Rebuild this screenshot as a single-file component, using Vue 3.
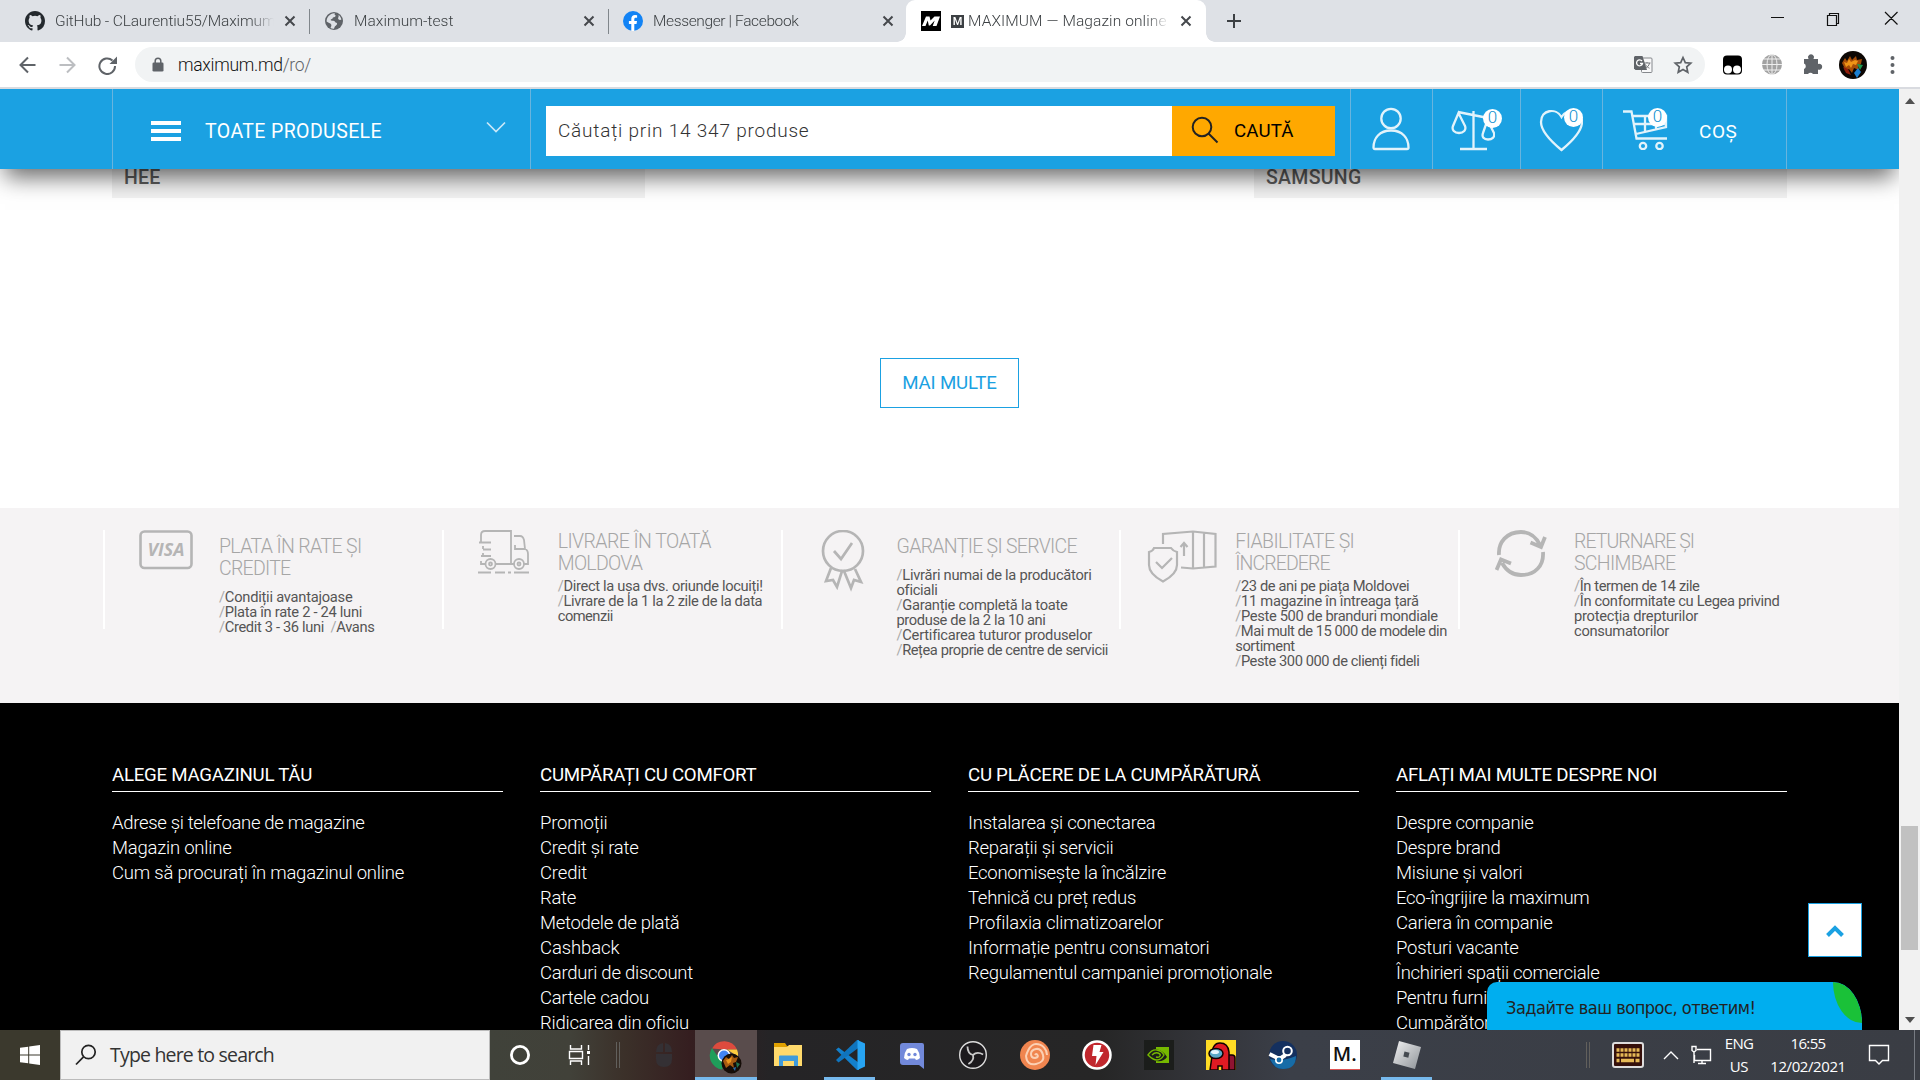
<script setup>
// Tracks a line of text out (or in) to the width given in the data.
const vFit = {
  mounted(el, { value }) {
    if (!value) return
    const n = el.textContent.length
    const w = el.getBoundingClientRect().width
    el.style.letterSpacing = ((value + 0.5 - w) / n).toFixed(3) + 'px'
  },
}

const features = [
  {
    icon: 'card',
    high: false,
    title: [['PLATA ÎN RATE ȘI', 142], ['CREDITE', 71]],
    lines: [['/Condiții avantajoase', 133], ['/Plata în rate 2 - 24 luni', 142.5], ['/Credit 3 - 36 luni  /Avans', 155]],
  },
  {
    icon: 'truck',
    high: true,
    title: [['LIVRARE ÎN TOATĂ', 152.5], ['MOLDOVA', 84]],
    lines: [['/Direct la ușa dvs. oriunde locuiți!', 204.5], ['/Livrare de la 1 la 2 zile de la data', 204], ['comenzii', 54.5]],
  },
  {
    icon: 'medal',
    high: false,
    title: [['GARANȚIE ȘI SERVICE', 180]],
    lines: [
      ['/Livrări numai de la producători', 194.5], ['oficiali', 40], ['/Garanție completă la toate', 170.5],
      ['produse de la 2 la 10 ani', 148.5], ['/Certificarea tuturor produselor', 194.5], ['/Rețea proprie de centre de servicii', 211],
    ],
  },
  {
    icon: 'box',
    high: true,
    title: [['FIABILITATE ȘI', 118.5], ['ÎNCREDERE', 94]],
    lines: [
      ['/23 de ani pe piața Moldovei', 173.5], ['/11 magazine în întreaga țară', 183], ['/Peste 500 de branduri mondiale', 202],
      ['/Mai mult de 15 000 de modele din', 211], ['sortiment', 59], ['/Peste 300 000 de clienți fideli', 183],
    ],
  },
  {
    icon: 'refresh',
    high: true,
    title: [['RETURNARE ȘI', 119.5], ['SCHIMBARE', 101]],
    lines: [['/În termen de 14 zile', 125], ['/În conformitate cu Legea privind', 205], ['protecția drepturilor', 123.5], ['consumatorilor', 94.5]],
  },
]
const pieces = (s) => s.split(/(\/)/).filter(Boolean)

const columns = [
  {
    title: ['ALEGE MAGAZINUL TĂU', 199.5],
    links: [['Adrese și telefoane de magazine', 252], ['Magazin online', 119], ['Cum să procurați în magazinul online', 291.5]],
  },
  {
    title: ['CUMPĂRAȚI CU COMFORT', 216],
    links: [
      ['Promoții', 67], ['Credit și rate', 98], ['Credit', 46.5], ['Rate', 35.5], ['Metodele de plată', 139],
      ['Cashback', 79], ['Carduri de discount', 152.5], ['Cartele cadou', 108.5], ['Ridicarea din oficiu', 148],
    ],
  },
  {
    title: ['CU PLĂCERE DE LA CUMPĂRĂTURĂ', 292],
    links: [
      ['Instalarea și conectarea', 187], ['Reparații și servicii', 145], ['Economisește la încălzire', 197.5], ['Tehnică cu preț redus', 167.5],
      ['Profilaxia climatizoarelor', 194.5], ['Informație pentru consumatori', 241], ['Regulamentul campaniei promoționale', 303.5],
    ],
  },
  {
    title: ['AFLAȚI MAI MULTE DESPRE NOI', 260.5],
    links: [
      ['Despre companie', 137], ['Despre brand', 104], ['Misiune și valori', 126], ['Eco-îngrijire la maximum', 193],
      ['Cariera în companie', 156], ['Posturi vacante', 122], ['Închirieri spații comerciale', 203],
      ['Pentru furnizori', 119], ['Cumpărători corporativi', 184],
    ],
  },
]

const apps = ['mouse', 'chrome', 'folder', 'vscode', 'discord', 'obs', 'swirl', 'bolt', 'nvidia', 'among', 'steam', 'mdot', 'roblox']
const running = ['vscode', 'roblox']
const tabs = [
  { icon: 'github', text: 'GitHub - CLaurentiu55/Maximum', w: 220 },
  { icon: 'world', text: 'Maximum-test', w: 99 },
  { icon: 'fb', text: 'Messenger | Facebook', w: 145 },
]
</script>

<template>
  <div class="screen">
    <!-- Tab strip -->
    <div class="tabstrip">
      <div v-for="t in tabs" :key="t.icon" class="tab">
        <svg v-if="t.icon === 'github'" class="fav" viewBox="0 0 16 16"><path fill="#24292e" d="M8 0C3.58 0 0 3.58 0 8c0 3.54 2.29 6.53 5.47 7.59.4.07.55-.17.55-.38 0-.19-.01-.82-.01-1.49-2.01.37-2.53-.49-2.69-.94-.09-.23-.48-.94-.82-1.13-.28-.15-.68-.52-.01-.53.63-.01 1.08.58 1.23.82.72 1.21 1.87.87 2.33.66.07-.52.28-.87.51-1.07-1.78-.2-3.64-.89-3.64-3.95 0-.87.31-1.59.82-2.15-.08-.2-.36-1.02.08-2.12 0 0 .67-.21 2.2.82a7.5 7.5 0 0 1 4 0c1.53-1.04 2.2-.82 2.2-.82.44 1.1.16 1.92.08 2.12.51.56.82 1.27.82 2.15 0 3.07-1.87 3.75-3.65 3.95.29.25.54.73.54 1.48 0 1.07-.01 1.93-.01 2.2 0 .21.15.46.55.38A8 8 0 0 0 16 8c0-4.42-3.58-8-8-8z" /></svg>
        <svg v-else-if="t.icon === 'world'" class="fav" viewBox="0 0 20 20"><circle cx="10" cy="10" r="9" fill="#5f6368" /><path fill="#dee1e6" d="M11 2.2c-1 1-.3 1.800.7 2.300-.2 1.500-1.700 1.500-2.700 2-.6.500-.2 1.500-1.200 1.500S6.500 9 7 9.600c1.500.2 3.500-.4 4 1.200.4 1.300 2.600.6 2 2.400-.5 1.300-2 1.500-2.500 3l-.5 1.600c-1.200.2-2.500-.2-3.500-.7.500-1.300 1.200-2.200.7-3.500C6.500 12 4 11.800 2.600 10.500c0-2 .6-3.900 2-5.500C6.300 3.200 8.500 1.900 11 2.200zM14.500 4c1.500 1 2.600 2.700 2.900 4.500-1 .8-2.500.4-3.200-.6-.5-1.200 1-1.800.3-3.900z" /></svg>
        <svg v-else class="fav" viewBox="0 0 20 20"><circle cx="10" cy="10" r="10" fill="#1283f5" /><path fill="#fff" d="M8.300 20v-7H5.900v-3h2.400V8c0-2.600 1.500-4 3.700-4l2.100.2v2.500h-1.300c-1.200 0-1.500.7-1.500 1.500V10H14l-.5 3h-2.200v7z" /></svg>
        <div class="tabtext"><span v-fit="t.w">{{ t.text }}</span></div>
        <svg class="x" viewBox="0 0 12 12"><path d="M1.500 1.500l9 9M10.500 1.500l-9 9" /></svg>
      </div>
      <div class="tab active">
        <svg class="fav" viewBox="0 0 20 20"><rect width="20" height="20" /><path fill="#fff" d="M1 15L5 5.500h3.500l1 4 4-4H19L15.500 15h-3.800l2-5.500L9 14.500H7.800L6.700 9.500 4.500 15z" /></svg>
        <div class="tabtext"><b class="mbox">M</b><span v-fit="198">MAXIMUM — Magazin online</span></div>
        <svg class="x" viewBox="0 0 12 12"><path d="M1.500 1.500l9 9M10.500 1.500l-9 9" /></svg>
      </div>
      <svg class="plus" viewBox="0 0 16 16"><path d="M8 1v14M1 8h14" /></svg>
      <svg class="winctl" viewBox="0 0 130 16"><path d="M1 7.500h13M57.500 5.500h9v10h-9zM59.500 5V3.500h9v10h-2M115 2l12.500 12.500M127.500 2L115 14.500" /></svg>
    </div>

    <!-- Toolbar -->
    <div class="toolbar">
      <svg class="nav" viewBox="0 0 110 20" fill="none" stroke-width="2">
        <g stroke="#5f6368"><path d="M16.500 10H2M9 2.500L1.500 10 9 17.500" /><path d="M80.500 5.500A7.800 7.800 0 1 0 83 11" transform="translate(13 0)" /></g>
        <path stroke="#bcbec1" d="M40.500 10H55M48 2.500L55.500 10 48 17.500" />
        <path fill="#5f6368" d="M98 1.500v7.500H90.500z" />
      </svg>
      <div class="omni">
        <svg class="lock" viewBox="0 0 12 16"><rect x="0.500" y="5.500" width="11" height="9" rx="1.300" fill="#5f6368" /><path d="M3.200 6V4a2.800 2.800 0 0 1 5.600 0v2" fill="none" stroke="#5f6368" stroke-width="1.500" /></svg>
        <span v-fit="132.5" class="url">maximum.md<i>/ro/</i></span>
        <svg class="omniicons" viewBox="0 0 60 20">
          <rect x="7.500" y="3" width="10.500" height="14.500" rx="1" fill="#f8f8f9" stroke="#85888c" />
          <path fill="#5f6368" d="M1 1h7.500L13 15H1.500L0 13.500V2z" /><path d="M8 6A3 3 0 1 0 8.500 8.500H6" fill="none" stroke="#fff" stroke-width="1.300" />
          <path d="M10 8h6.500M13 7v1M15.500 8c-.5 3-2.500 4.500-4 5M11.500 9.500c1 2 2.500 3 4 3.700" fill="none" stroke="#777a7e" />
          <path fill="none" stroke="#5f6368" stroke-width="1.700" d="M49 2.500l2.300 5.100 5.500.6-4.100 3.700 1.100 5.400L49 14.500l-4.800 2.800 1.100-5.400-4.100-3.700 5.500-.6z" />
        </svg>
      </div>
      <svg class="exts" viewBox="0 0 180 30">
        <rect x="3" y="5.500" width="19" height="19" rx="4" /><circle cx="8" cy="19.500" r="4" fill="#fff" /><circle cx="17" cy="19.500" r="4" fill="#fff" />
        <circle cx="52" cy="14.500" r="10" fill="#a2a2a2" /><path d="M52 4.500v20M42 14.500h20M44 9h16M44 20h16" stroke="#eee" fill="none" /><ellipse cx="52" cy="14.500" rx="5" ry="10" fill="none" stroke="#eee" />
        <path fill="#5f6368" d="M84 9h4.500a3 3 0 1 1 5 0H98v5a3 3 0 1 1 0 5.500V24h-5a3 3 0 0 0-5 0h-4v-5a3 3 0 0 0 0-5.500z" />
        <circle cx="133" cy="15" r="14" fill="#0c0704" /><path d="M122 13l3-5 2 3 3-5 2 4 4-4 1 4 5-1-1 5-3 2 1 4-5-2-2 5-3-4-4 2-1-4z" fill="#a54c08" /><path d="M124 12l3 1 2-4 2 3 4-2 3 1-2 4-3-1-2 4-2-3-3 2z" fill="#ee9416" /><path d="M134 23l4-5 3 4-4 6z" fill="#1b7fd0" /><path d="M137 14l6 1-3 5z" fill="#1c9850" /><path d="M123 17l3 6 5 2-3-6z" fill="#911d0b" />
        <g fill="#5f6368"><circle cx="172.500" cy="8" r="2" /><circle cx="172.500" cy="15" r="2" /><circle cx="172.500" cy="22" r="2" /></g>
      </svg>
    </div>

    <!-- Web page -->
    <div class="viewport">
      <div class="page">
        <header class="header">
          <div class="all">
            <div class="burger"><i /><i /><i /></div>
            <span v-fit="176.5" class="alltext">TOATE PRODUSELE</span>
            <svg class="chev" viewBox="0 0 20 12"><path d="M1 1.500l9 9 9-9" /></svg>
          </div>
          <div class="searchcell">
            <div class="input"><span v-fit="251">Căutați prin 14 347 produse</span></div>
            <div class="go">
              <svg viewBox="0 0 28 28"><circle cx="11" cy="11" r="9.300" /><path d="M17.500 17.500l9 9" /></svg>
              <span v-fit="59">CAUTĂ</span>
            </div>
          </div>
          <div class="cell user"><svg viewBox="0 0 40 44"><circle cx="20" cy="11.500" r="9.700" /><path d="M2.500 40.500c0-9.500 6-17 17.500-17s17.500 7.500 17.500 17c0 1-.5 1.500-1.500 1.500H4c-1 0-1.500-.5-1.500-1.500z" /></svg></div>
          <div class="cell scales"><svg viewBox="0 0 44 44"><path d="M22.500 4v38M9 42h27M7 5l30 6M7.500 6L2 19c-1.500 4 1.500 7 6 7s7.500-3 6-7zM36.500 13L32 26c-1.500 4 1 6.500 5 6.500s7-2 6-6.500z" /></svg><em>0</em></div>
          <div class="cell heart"><svg viewBox="0 0 44 44"><path d="M22.500 42C14 35 2 24 2 14 2 1.500 17-.5 22.500 9 28 0 43 1 43 14c0 10-12 21-20.500 28z" /></svg><em>0</em></div>
          <div class="cell cart"><svg viewBox="0 0 46 42"><path d="M1 3.500h8.500l5 27H45M10.500 8H44v11l-30 7M12 16h32M23 8v15M34 8v13" /><circle cx="21" cy="38" r="3.200" /><circle cx="37.500" cy="38" r="3.200" /></svg><em>0</em><span v-fit="38">COȘ</span></div>
        </header>

        <main class="main">
          <div class="brands">
            <div class="brand"><span v-fit="36">HEE</span></div>
            <div class="brand"><span v-fit="95">SAMSUNG</span></div>
          </div>
          <div class="more"><span v-fit="94">MAI MULTE</span></div>
        </main>

        <section class="features">
          <div v-for="f in features" :key="f.icon" class="feature" :class="[f.icon, { high: f.high }]">
            <div class="rule" />
            <div class="ficon">
              <svg v-if="f.icon === 'card'" width="54" height="40" viewBox="0 0 54 40"><rect x="1.500" y="1.500" width="51" height="36.500" rx="4" /><text x="27" y="26" text-anchor="middle" textLength="37" lengthAdjust="spacingAndGlyphs">VISA</text></svg>
              <svg v-else-if="f.icon === 'truck'" width="52" height="44" viewBox="0 0 52 44" stroke-width="1.800"><path d="M3 12V5q0-4 4-4h26v33H18M7 34H3v-3M1 12.500h12M5 19.500h8M3 26h10M5 16v3M5 23v3M36 6h6q3 0 4 4l1 9h-10v-4M47 19q3 1 3 5v10h-4M33 34h3" /><circle cx="12.500" cy="34" r="5" /><circle cx="12.500" cy="34" r="1.500" /><circle cx="41" cy="34" r="5" /><circle cx="41" cy="34" r="1.500" /><path d="M0 42.500h13M17 42.500h10M30 42.500h3M36 42.500h15" /></svg>
              <svg v-else-if="f.icon === 'medal'" width="44" height="62" viewBox="0 0 44 62" stroke-width="2.700"><circle cx="22" cy="21" r="20" /><path d="M13 21l7 8 11-16M10 38L5 51l7-1 4 7 5-16h2l7 17 3-8 7 2-6-13" /></svg>
              <svg v-else-if="f.icon === 'box'" width="70" height="54" viewBox="0 0 70 54" stroke-width="2.200"><path d="M16 14V4l30-2.500 22.500 2.500v32.500L46 38.500l-12-1M46 1.500v37M57 3v34M37 26V13M33.500 17l3.500-4 3.500 4" /><path d="M2 22q4-1 5-4h17q2 3 6 4v13q0 9-14 16.500Q2 44 2 35V22zM9 32l6 6 10-10" /></svg>
              <svg v-else width="52" height="48" viewBox="0 0 52 48" stroke-width="3.800"><path d="M4 25C3 12 12 2 26 2c9 0 15 5 19 13M35.500 12.500L46 17l4-10M48 22c1 14-8 23-22 23-9 0-15-5-19-12M1.500 40L6 29.500 16 33.500" /></svg>
            </div>
            <div class="ftext">
              <div class="ftitle"><div v-for="l in f.title" :key="l[0]"><span v-fit="l[1]">{{ l[0] }}</span></div></div>
              <div class="flines"><div v-for="l in f.lines" :key="l[0]"><span v-fit="l[1]"><span v-for="(p, i) in pieces(l[0])" :key="i" :class="{ slash: p === '/' }">{{ p }}</span></span></div></div>
            </div>
          </div>
        </section>

        <footer class="footer">
          <div v-for="c in columns" :key="c.title[0]" class="fcol">
            <h3><span v-fit="c.title[1]">{{ c.title[0] }}</span></h3>
            <ul><li v-for="l in c.links" :key="l[0]"><span v-fit="l[1]">{{ l[0] }}</span></li></ul>
          </div>
        </footer>

        <div class="totop"><svg viewBox="0 0 20 16"><path d="M2.500 13.500L10 6l7.500 7.500" /></svg></div>
        <div class="chat"><span v-fit="249">Задайте ваш вопрос, ответим!</span><i /></div>
      </div>
      <div class="scrollbar">
        <svg viewBox="0 0 10 6"><path d="M0 6l5-6 5 6z" /></svg>
        <div class="thumb" />
        <svg viewBox="0 0 10 6"><path d="M0 0h10L5 6z" /></svg>
      </div>
    </div>

    <!-- Taskbar -->
    <div class="taskbar">
      <div class="start"><svg viewBox="0 0 20 20"><path fill="#fff" d="M0 2.800L8.200 1.700v7.900H0zM9.200 1.500L20 0v9.600H9.200zM0 10.500h8.200v7.800L0 17.200zM9.200 10.500H20V20L9.200 18.500z" /></svg></div>
      <div class="find">
        <svg viewBox="0 0 22 22"><circle cx="13.500" cy="8" r="6.700" /><path d="M8.500 12.800L1 20.500" /></svg>
        <span v-fit="163.500">Type here to search</span>
      </div>
      <div class="tv"><svg viewBox="0 0 60 60"><circle cx="30" cy="25" r="8.600" fill="none" stroke="#fff" stroke-width="2.800" /></svg></div>
      <div class="tv"><svg viewBox="0 0 60 60"><path d="M20.500 15v4h11v-4M20.500 35v-4h11v4M19.500 21.500h13v7h-13zM38.500 15v5M38.500 26v9" fill="none" stroke="#fff" stroke-width="1.400" /><rect x="37" y="21" width="3" height="3" fill="#fff" /></svg></div>
      <div class="sep" />
      <div class="apps">
        <div v-for="a in apps" :key="a" class="app" :class="{ current: a === 'chrome' }">
          <svg v-if="a === 'mouse'" viewBox="0 0 30 30"><path fill="#343034" d="M7 12h7V3q-7 1-7 9zM16 3v9h7q0-8-7-9zM7 14h16v5q0 8-8 8t-8-8z" /></svg>
          <svg v-else-if="a === 'chrome'" viewBox="0 0 34 34"><path fill="#dd4b3e" d="M3 8.500A14 14 0 0 1 28 9.500H15z" /><path fill="#1f9e5a" d="M3 8A14 14 0 0 0 13 29.500l4-9-9-5z" /><path fill="#ffcd40" d="M18 9.500h10a14 14 0 0 1 1 7z" /><circle cx="15" cy="15.500" r="6.500" fill="#fff" /><circle cx="15" cy="15.500" r="5" fill="#4285f4" /><circle cx="22.500" cy="23.500" r="10" fill="#150d08" /><path fill="#a75b12" d="M14 21l3-4 3 2 3-4 2 3 4-1-2 5-3 1 1 5-4-3-4 3z" /><path fill="#ec971d" d="M17 20l3-1 3-2-1 5-3 2z" /><path fill="#23734e" d="M27 22l4 2-3 4z" /><path fill="#2a6fae" d="M24 28l3-1-1 4z" /></svg>
          <svg v-else-if="a === 'folder'" viewBox="0 0 30 30"><path fill="#e0a100" d="M1 3h11l2 3h2v5H1z" /><path fill="#ffda6c" d="M1 7h13l2-2h13v21H1z" /><path fill="#3f9bdc" d="M7 15.500h17q1 0 1 1V26h-4v-5H10v5H6v-9.500q0-1 1-1z" /></svg>
          <svg v-else-if="a === 'vscode'" viewBox="0 0 30 30"><path fill="#1380cc" d="M1 9.500L3.500 7.500 24 23v7L22 30z" /><path fill="#0f74bd" d="M1 20l2.500 2.500L24 7.500V0h-2z" /><path fill="#27a4f2" d="M22.500 0L30 3.500v23L22.500 30z" /></svg>
          <svg v-else-if="a === 'discord'" viewBox="0 0 30 30"><path fill="#7289da" d="M6 3h19q2 0 2 2v24l-5-4H6q-3 0-3-3V6q0-3 3-3z" /><path fill="#fff" d="M10 9q5-2 10 0 3 4 3 9-2 2-4 2l-1-1.500h-6L11 20q-2 0-4-2 0-5 3-9z" /><circle cx="12" cy="14.500" r="1.700" fill="#7289da" /><circle cx="18" cy="14.500" r="1.700" fill="#7289da" /></svg>
          <svg v-else-if="a === 'obs'" viewBox="0 0 30 30"><circle cx="15" cy="15" r="13.300" fill="#1c1a1d" stroke="#ddd" stroke-width="1.400" /><g fill="none" stroke="#c9c9c9" stroke-width="1.800"><path d="M15 15Q9.500 13.500 9.500 6.500" /><path d="M15 15Q9.500 13.500 9.500 6.500" transform="rotate(120 15 15)" /><path d="M15 15Q9.500 13.500 9.500 6.500" transform="rotate(240 15 15)" /></g></svg>
          <svg v-else-if="a === 'swirl'" viewBox="0 0 30 30"><circle cx="15" cy="15" r="15" fill="#f0854f" /><path d="M15 15q1-2 2.500 0t-2.500 3q-4 0-4-4t5-5 7 6-7 9-10-8S9 4 16 4s11 6 11 11" fill="none" stroke="#fbd0b4" stroke-width="2" /></svg>
          <svg v-else-if="a === 'bolt'" viewBox="0 0 30 30"><circle cx="15" cy="15" r="13.500" fill="#c1272d" stroke="#fff" stroke-width="2.500" /><path fill="#fff" d="M11.500 5h8l-2 7h4l-8 13 1-9h-4.500z" /></svg>
          <svg v-else-if="a === 'nvidia'" viewBox="0 0 30 30"><path fill="#1b1d1b" d="M0 0h30v30H0z" /><path fill="#76b900" d="M12 7h13v16H12v-2q8 1 11-4-3-6-11-8z" /><path fill="none" stroke="#76b900" stroke-width="1.400" d="M4 15q4-6 9-5t7 5q-3 5-7 5T4 15zm4 0q3-3 6-2t2 3-4 1" /></svg>
          <svg v-else-if="a === 'among'" viewBox="0 0 30 30"><path fill="#ffdc25" d="M0 0h30v30H0z" /><path fill="#8f1331" stroke="#100" stroke-width="1.500" d="M21 15h5q3 0 3 3v12h-8z" /><path fill="#e01b23" stroke="#100" stroke-width="1.500" d="M4 30l2-14Q6 3 14 3t9 9v18h-7v-4h-4v4z" /><ellipse cx="10" cy="13.500" rx="7" ry="5" fill="#5aa8c6" stroke="#100" stroke-width="1.500" /><ellipse cx="9" cy="12" rx="4" ry="2" fill="#e5f6fd" /></svg>
          <svg v-else-if="a === 'steam'" viewBox="0 0 30 30"><circle cx="15" cy="15" r="14" fill="#14305f" /><path fill="#176ca7" d="M2 19q12 3 26-3 0 13-13 13-9 0-13-10z" /><circle cx="19.500" cy="11" r="4.300" fill="#14305f" stroke="#fff" stroke-width="2" /><path d="M1.500 14l10 5 6-4" fill="none" stroke="#fff" stroke-width="4" /><circle cx="11" cy="20" r="3.200" fill="#176ca7" stroke="#fff" stroke-width="1.600" /></svg>
          <div v-else-if="a === 'mdot'" class="mdot">M.</div>
          <svg v-else viewBox="0 0 30 30"><defs><linearGradient id="rb" x2="1" y2="1"><stop offset="0" stop-color="#f2f2f3" /><stop offset="1" stop-color="#8d9297" /></linearGradient></defs><path fill="url(#rb)" d="M7 1l22 6-6 22L1 23z" /><path fill="#454a50" d="M12.500 11.500l5 1.300-1.200 5-5-1.300z" /></svg>
          <div v-if="a === 'chrome' || running.includes(a)" class="under" />
        </div>
      </div>
      <div class="tray">
        <div class="sep" />
        <svg class="kbd" viewBox="0 0 32 26"><rect x="1" y="1" width="30" height="24" rx="2" fill="#35100b" stroke="#ddd" stroke-width="2" /><path d="M4.500 8h24M4.500 13h24" stroke="#e6b956" stroke-width="3.600" stroke-dasharray="3 1" /><path d="M4.500 18.500h3M9 18.500h13M23.500 18.500h4" stroke="#e6b956" stroke-width="3.600" /></svg>
        <svg class="up" viewBox="0 0 16 10"><path d="M1 9l7-7 7 7" /></svg>
        <svg class="net" viewBox="0 0 22 20"><path d="M7 4.500h13.500v11H4.500V10M12 15.500v3M8 18.500h8M2 1.500h4v4L4 7 2 5.500zM4 7v11" /></svg>
        <div class="lang"><span v-fit="28">ENG</span><span v-fit="18">US</span></div>
        <div class="clock"><span v-fit="34.500">16:55</span><span v-fit="75">12/02/2021</span></div>
        <svg class="notif" viewBox="0 0 22 22"><path d="M1.500 1.500h19v15h-6L11 20l-3.500-3.500h-6z" /></svg>
        <div class="desk" />
      </div>
    </div>
  </div>
</template>

<style>
body { margin: 0; overflow: hidden; }
</style>

<style scoped>
* { box-sizing: border-box; }
svg { display: block; flex: none; }
.screen { width: 1920px; height: 1080px; display: flex; flex-direction: column; overflow: hidden; font-family: Roboto, "Liberation Sans", sans-serif; white-space: pre; background: #fff; }

.tabstrip { height: 42px; flex: none; background: #dee1e6; display: flex; align-items: center; padding-left: 11px; }
.tab { width: 299px; height: 42px; display: flex; align-items: center; padding-left: 14px; position: relative; color: #3c4043; font-size: 15.5px; font-weight: 300; }
.tab:not(.active)::after { content: ""; position: absolute; right: 0; top: 9px; width: 1px; height: 25px; background: #80868b; }
.tab:nth-child(3)::after { display: none; }
.fav { width: 20px; height: 20px; }
.tabtext { width: 220px; margin-left: 10px; overflow: hidden; line-height: 22px; -webkit-mask-image: linear-gradient(90deg, #000 195px, transparent 219px); mask-image: linear-gradient(90deg, #000 195px, transparent 219px); }
.x { width: 12px; height: 12px; margin-left: 9px; fill: none; stroke: #45484c; stroke-width: 2; }
.tab.active { width: 300px; margin-left: -2px; background: #fff; border-radius: 9px 9px 0 0; color: #3c4043; padding-left: 15px; }
.tab.active::before, .tab.active::after { content: ""; position: absolute; bottom: 0; width: 9px; height: 9px; }
.tab.active::before { left: -9px; background: radial-gradient(circle at 0 0, transparent 8.5px, #fff 9px); }
.tab.active::after { right: -9px; background: radial-gradient(circle at 100% 0, transparent 8.5px, #fff 9px); }
.mbox { display: inline-block; width: 13px; height: 13px; line-height: 13px; font-size: 11px; text-align: center; color: #fff; background: #3c4043; margin-right: 4px; font-weight: 500; vertical-align: 1px; }
.plus { width: 16px; height: 16px; margin-left: 20px; fill: none; stroke: #3c4043; stroke-width: 2; }
.winctl { width: 130px; height: 16px; margin: -6px 0 0 auto; margin-right: 20px; fill: none; stroke: #111; stroke-width: 1.2; }

.toolbar { height: 47px; flex: none; display: flex; align-items: center; border-bottom: 2px solid #d9dbe0; padding-left: 19px; }
.nav { width: 110px; height: 20px; }
.omni { width: 1570px; height: 35px; border-radius: 18px; background: #f1f3f4; margin-left: 6px; display: flex; align-items: center; padding-left: 17px; }
.lock { width: 12px; height: 16px; }
.url { margin-left: 14px; font-size: 17.5px; font-weight: 300; color: #111; }
.url i { font-style: normal; color: #5f6368; }
.omniicons { width: 60px; height: 20px; margin-left: auto; margin-right: 11px; }
.exts { width: 180px; height: 30px; margin-left: 15px; }

.viewport { height: 941px; display: flex; overflow: hidden; }
.page { width: 1899px; height: 941px; position: relative; overflow: hidden; flex: none; }
.header { height: 80px; background: #1ba1e2; display: flex; padding-left: 112px; color: #fff; position: relative; z-index: 2; box-shadow: 0 13px 22px -5px rgba(0, 0, 0, .6); }
.all { width: 418px; border-left: 1px solid #68b4de; display: flex; align-items: center; padding-left: 38px; }
.burger { width: 30px; display: flex; flex-direction: column; gap: 4px; padding-top: 3px; }
.burger i { height: 4px; background: #fff; }
.alltext { margin: 4px 0 0 24px; font-size: 19.5px; }
.chev { width: 20px; height: 12px; margin: -4px 24px 0 auto; fill: none; stroke: #c9e8f8; stroke-width: 1.7; }
.searchcell { width: 820px; border-left: 1px solid #68b4de; display: flex; align-items: flex-start; padding: 17px 0 0 15px; }
.input { width: 626px; height: 50px; background: #fff; color: #333; font-size: 19px; font-weight: 300; padding-left: 12px; line-height: 50px; }
.go { width: 163px; height: 50px; background: #ffa800; color: #000; display: flex; align-items: center; padding-left: 19px; font-size: 18.7px; }
.go svg { width: 28px; height: 28px; margin-top: -2px; fill: none; stroke: #222; stroke-width: 2; }
.go span { margin-left: 15px; }
.cell { border-left: 1px solid #68b4de; display: flex; position: relative; }
.cell svg { fill: none; stroke: #e2f3fb; stroke-width: 2.3; }
.cell em { position: absolute; width: 19px; height: 19px; border-radius: 50%; background: #fff; color: #0f90d0; font: 300 17px/17px Roboto, sans-serif; text-align: center; }
.user { width: 82px; }
.user svg { width: 40px; height: 44px; margin: 18px 0 0 20px; }
.scales { width: 88px; }
.scales svg { width: 44px; height: 44px; margin: 18px 0 0 18px; }
.scales em { left: 50px; top: 20px; }
.heart { width: 82px; }
.heart svg { width: 44px; height: 44px; margin: 19px 0 0 18px; }
.heart em { left: 43px; top: 19px; }
.cart { width: 185px; border-right: 1px solid #68b4de; }
.cart svg { width: 46px; height: 42px; margin: 19px 0 0 19px; }
.cart em { left: 45px; top: 19px; }
.cart span { font-size: 19px; margin: 31px 0 0 31px; }

.main { height: 339px; display: flex; flex-direction: column; align-items: center; }
.brands { width: 1675px; height: 29px; display: flex; justify-content: space-between; }
.brand { width: 533px; background: #f2f2f2; padding-left: 12px; font-size: 19.5px; font-weight: 500; line-height: 18px; color: #5c5c5c; }
.more { width: 139px; height: 50px; border: 1px solid #1ba1e2; color: #1ba1e2; margin-top: 160px; display: flex; align-items: center; justify-content: center; font-size: 18.7px; }

.features { height: 195px; background: #f5f3f4; display: flex; padding: 22px 0 0 103px; }
.feature { width: 338.75px; flex: none; display: flex; }
.rule { width: 2px; height: 99px; background: #fff; }
.ficon { width: 114px; }
.ficon svg { fill: none; stroke: #b5b5b5; }
.card .ficon svg { margin-left: 33.5px; stroke-width: 2.6; }
.card text { fill: #b5b5b5; stroke: none; font: italic 700 18px "Open Sans", sans-serif; }
.truck .ficon svg { margin-left: 34.5px; }
.medal .ficon svg { margin-left: 38px; }
.box .ficon svg { margin-left: 26px; }
.refresh .ficon svg { margin-left: 35px; }
.ftext { padding-top: 5px; }
.high .ftext { padding-top: 0; }
.ftitle { position: relative; top: 1px; font-size: 19.5px; line-height: 22px; font-weight: 300; color: #a6a6a6; margin-bottom: 11px; }
.high .ftitle { margin-bottom: 5px; }
.flines { font-size: 14.7px; line-height: 15px; color: #555; }
.slash { color: #aaa; }

.footer { height: 327px; background: #000; color: #fff; display: flex; gap: 37px; padding: 60px 0 0 112px; }
.fcol { width: 391px; }
.fcol h3 { margin: 0; font-size: 18.7px; font-weight: 400; line-height: 22px; height: 29px; padding-top: 1px; border-bottom: 1px solid #fff; }
.fcol ul { list-style: none; margin: 19px 0 0; padding: 0; font-size: 18.5px; font-weight: 300; line-height: 25px; }
.totop { position: absolute; left: 1808px; top: 814px; width: 54px; height: 54px; border: 1px solid #1ba1e2; background: #fff; display: flex; align-items: center; justify-content: center; }
.totop svg { width: 20px; height: 16px; fill: none; stroke: #1ba1e2; stroke-width: 4; }
.chat { position: absolute; left: 1487px; top: 893px; width: 375px; height: 48px; background: #00aeef; border-radius: 10px 29px 0 0 / 10px 41px 0 0; overflow: hidden; padding: 15px 0 0 19px; font-family: "DejaVu Sans Condensed", "DejaVu Sans", sans-serif; font-stretch: condensed; font-size: 18px; line-height: 22px; color: #222; }
.chat i { position: absolute; right: 0; top: 0; width: 29px; height: 41px; background: #1ac138; border-radius: 0 29px 0 29px / 0 41px 0 41px; }

.scrollbar { width: 21px; background: #f1f1f1; position: relative; display: flex; flex-direction: column; align-items: center; justify-content: space-between; padding: 9px 0 7px; fill: #505050; }
.scrollbar svg { width: 10px; height: 6px; }
.thumb { position: absolute; left: 2px; top: 737px; width: 17px; height: 124px; background: #c1c1c1; }

.taskbar { height: 50px; flex: none; display: flex; align-items: center; background: linear-gradient(90deg, #3b392d 0, #3b392d 60px, #40423a 490px, #414139 570px, #3b3029 625px, #351e20 690px, #252426 770px, #262626 1100px, #333439 1200px, #3b3f48 1290px, #3a3d44 1920px); }
.start { width: 60px; padding-left: 20px; }
.start svg { width: 20px; height: 20px; }
.find { width: 430px; height: 50px; background: #f1f1f1; border: 1px solid #bbb; display: flex; align-items: center; padding-left: 14px; font: 19.5px "Open Sans", "Noto Sans", sans-serif; color: #333; }
.find svg { width: 22px; height: 22px; fill: none; stroke: #222; stroke-width: 1.7; }
.find span { margin-left: 13px; margin-top: -1px; }
.tv { width: 60px; height: 50px; }
.tv svg { width: 60px; height: 60px; }
.sep { width: 4px; height: 26px; border: solid #62605c; border-width: 0 1px; margin-left: 6px; }
.apps { display: flex; margin-left: 13px; }
.app { width: 61.9px; height: 50px; display: flex; align-items: center; justify-content: center; position: relative; }
.app svg { width: 30px; height: 30px; }
.app.current { background: #594c4c; }
.app.current svg { width: 34px; height: 34px; margin-top: 3px; }
.under { position: absolute; bottom: 0; left: 5px; width: 51px; height: 3px; background: #76b9ed; }
.current .under { left: 0; width: 62px; }
.mdot { width: 30px; height: 30px; background: #fff; border-bottom: 1px solid #d55; color: #111; font: 600 20px/28px "Open Sans", sans-serif; text-align: center; }
.tray { display: flex; align-items: center; margin-left: auto; height: 50px; color: #fff; font: 15px/23px "Open Sans", "Noto Sans", sans-serif; }
.tray .sep { margin: 0 22px 0 0; }
.tray svg { fill: none; stroke: #fff; stroke-width: 1.4; }
.kbd { width: 32px; height: 26px; }
.up { width: 16px; height: 10px; margin-left: 19px; }
.net { width: 22px; height: 20px; margin-left: 11px; }
.lang, .clock { display: flex; flex-direction: column; align-items: center; }
.lang { width: 32px; margin-left: 11px; }
.clock { width: 80px; margin-left: 13px; }
.notif { width: 22px; height: 22px; margin-left: 20px; }
.desk { width: 1px; height: 50px; background: #777b82; margin: 0 5px 0 24px; }
</style>
